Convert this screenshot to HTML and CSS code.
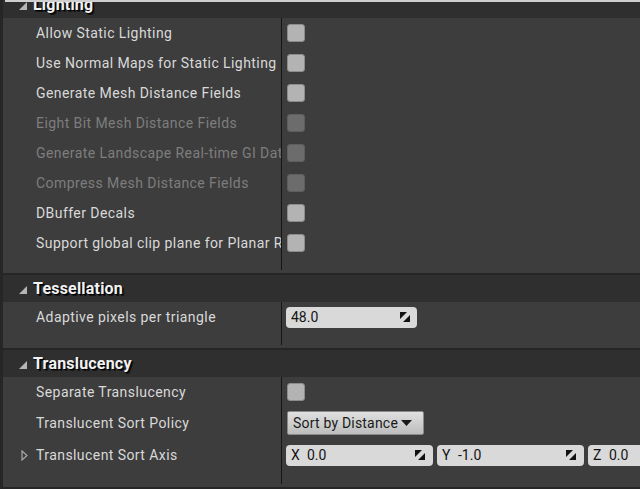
FILE: index.html
```html
<!DOCTYPE html>
<html>
<head>
<meta charset="utf-8">
<link rel="stylesheet" href="styles.css">
</head>
<body>
<div class="top-strip"></div>
<div class="panel">
  <section class="cat cat-lighting">
    <div class="cat-head"><svg class="tri" viewBox="0 0 8 8"><path d="M8 0V8H0Z"/></svg><span class="cat-title">Lighting</span></div>
    <div class="cat-body">
      <div class="row"><div class="name"><span class="exp"></span><span class="label">Allow Static Lighting</span></div><div class="val"><span class="cb"></span></div></div>
      <div class="row"><div class="name"><span class="exp"></span><span class="label">Use Normal Maps for Static Lighting</span></div><div class="val"><span class="cb"></span></div></div>
      <div class="row"><div class="name"><span class="exp"></span><span class="label">Generate Mesh Distance Fields</span></div><div class="val"><span class="cb"></span></div></div>
      <div class="row off"><div class="name"><span class="exp"></span><span class="label">Eight Bit Mesh Distance Fields</span></div><div class="val"><span class="cb"></span></div></div>
      <div class="row off"><div class="name"><span class="exp"></span><span class="label">Generate Landscape Real-time GI Data</span></div><div class="val"><span class="cb"></span></div></div>
      <div class="row off"><div class="name"><span class="exp"></span><span class="label">Compress Mesh Distance Fields</span></div><div class="val"><span class="cb"></span></div></div>
      <div class="row"><div class="name"><span class="exp"></span><span class="label">DBuffer Decals</span></div><div class="val"><span class="cb"></span></div></div>
      <div class="row"><div class="name"><span class="exp"></span><span class="label">Support global clip plane for Planar Reflections</span></div><div class="val"><span class="cb"></span></div></div>
      <div class="row tail"><div class="name"></div><div class="val"></div></div>
    </div>
  </section>

  <section class="cat">
    <div class="cat-head"><svg class="tri" viewBox="0 0 8 8"><path d="M8 0V8H0Z"/></svg><span class="cat-title">Tessellation</span></div>
    <div class="cat-body">
      <div class="row"><div class="name"><span class="exp"></span><span class="label">Adaptive pixels per triangle</span></div><div class="val"><div class="num num-wide"><span class="num-text">48.0</span><svg class="spin" viewBox="0 0 10 10"><path d="M0 0H7L0 7Z M10 3V10H3Z"/></svg></div></div></div>
      <div class="row tail"><div class="name"></div><div class="val"></div></div>
    </div>
  </section>

  <section class="cat">
    <div class="cat-head"><svg class="tri" viewBox="0 0 8 8"><path d="M8 0V8H0Z"/></svg><span class="cat-title">Translucency</span></div>
    <div class="cat-body">
      <div class="row"><div class="name"><span class="exp"></span><span class="label">Separate Translucency</span></div><div class="val"><span class="cb"></span></div></div>
      <div class="row row-tall"><div class="name"><span class="exp"></span><span class="label">Translucent Sort Policy</span></div><div class="val"><div class="combo"><span>Sort by Distance</span><svg class="caret" viewBox="0 0 11 6"><path d="M0 0H11L5.5 6Z"/></svg></div></div></div>
      <div class="row row-tall"><div class="name"><span class="exp"><svg class="expander" viewBox="0 0 7 11"><path d="M1 1L6 5.5L1 10Z"/></svg></span><span class="label">Translucent Sort Axis</span></div>
        <div class="val vec">
          <div class="num"><span class="axis">X</span><span class="num-text">0.0</span><svg class="spin" viewBox="0 0 10 10"><path d="M0 0H7L0 7Z M10 3V10H3Z"/></svg></div>
          <div class="num"><span class="axis">Y</span><span class="num-text">-1.0</span><svg class="spin" viewBox="0 0 10 10"><path d="M0 0H7L0 7Z M10 3V10H3Z"/></svg></div>
          <div class="num num-cut"><span class="axis">Z</span><span class="num-text">0.0</span></div>
        </div>
      </div>
      <div class="row tail"><div class="name"></div><div class="val"></div></div>
    </div>
  </section>
</div>
</body>
</html>
```

FILE: styles.css
```css
html, body {
  margin: 0;
  padding: 0;
  height: 100%;
  overflow: hidden;
  background: #262626;
  font-family: Roboto, "Noto Sans", sans-serif;
}

.top-strip {
  position: absolute;
  top: 0;
  left: 5px;
  right: 0;
  height: 2px;
  background: #cfcfcf;
  z-index: 2;
}

.panel {
  margin-top: -9px;
  margin-left: 3px;
  display: flex;
  flex-direction: column;
  gap: 2px;
  overflow: hidden;
}

.cat-head {
  height: 27px;
  background: #2f2f2f;
  display: flex;
  align-items: center;
  padding-left: 16px;
}

.tri {
  width: 8px;
  height: 8px;
  fill: #b5b5b5;
  margin-top: 2px;
  margin-right: 6px;
  flex: none;
}

.cat-title {
  color: #f2f2f2;
  font-weight: 700;
  font-size: 16px;
  letter-spacing: 0.2px;
  text-shadow: 1px 1px 0 #000, 2px 2px 0 rgba(0, 0, 0, 0.6);
}

.cat-body {
  background: #3d3d3d;
  padding-bottom: 3px;
}

.row {
  display: flex;
  height: 30px;
}

.row-tall {
  height: 32px;
}

.tail {
  height: 13px;
}

.cat-lighting .tail {
  height: 12px;
}

.name {
  width: 260px;
  flex: none;
  border-right: 1px solid #151515;
  display: flex;
  align-items: center;
  padding-left: 18px;
  overflow: hidden;
  white-space: nowrap;
}

.exp {
  width: 15px;
  flex: none;
  display: flex;
  align-items: center;
}

.expander {
  width: 7px;
  height: 11px;
  fill: none;
  stroke: #a8a8a8;
  stroke-width: 1.2;
}

.label {
  color: #d9d9d9;
  font-size: 14px;
  letter-spacing: 0.43px;
}

.off .label {
  color: #7d7d7d;
}

.val {
  flex: 1;
  min-width: 0;
  display: flex;
  align-items: center;
  padding-left: 4px;
}

.cb {
  width: 16px;
  height: 16px;
  margin-left: 1px;
  border-radius: 3px;
  background: #b3b3b3;
  border: 1px solid #8c8c8c;
}

.off .cb {
  background: #6c6c6c;
  border-color: #5e5e5e;
}

.num {
  width: 147px;
  flex: none;
  height: 21px;
  border-radius: 4px;
  background: #d9d9d9;
  display: flex;
  align-items: center;
  padding: 0 8px 0 5px;
  box-sizing: border-box;
  color: #141414;
  font-size: 14px;
}

.num-wide {
  width: 131px;
  padding-right: 7px;
}

.num-cut {
  flex: 1;
  width: auto;
  border-radius: 4px 0 0 4px;
}

.num-text {
  flex: 1;
}

.axis {
  width: 16px;
  flex: none;
}

.spin {
  width: 10px;
  height: 10px;
  fill: #111;
  flex: none;
}

.vec {
  gap: 4px;
  overflow: hidden;
}

.combo {
  width: 137px;
  height: 24px;
  margin-left: 1px;
  box-sizing: border-box;
  border: 1px solid #8a8a8a;
  border-radius: 2px;
  background: linear-gradient(#e0e0e0, #bdbdbd);
  display: flex;
  align-items: center;
  padding-left: 5px;
  color: #1a1a1a;
  font-size: 14px;
  letter-spacing: 0.2px;
}

.caret {
  width: 11px;
  height: 6px;
  fill: #1a1a1a;
  margin-left: 3px;
}
```
